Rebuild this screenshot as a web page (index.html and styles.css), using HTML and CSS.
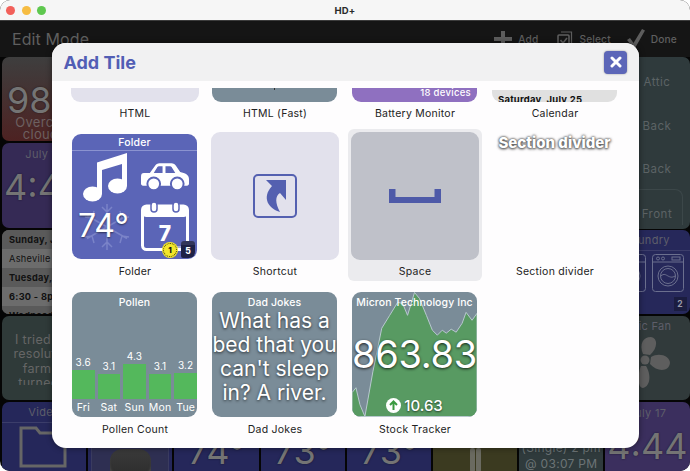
FILE: index.html
```html
<!DOCTYPE html>
<html lang="en">
<head>
<meta charset="utf-8">
<title>HD+</title>
<link rel="stylesheet" href="styles.css">
</head>
<body>
<div class="window">
  <div class="titlebar">
    <div class="lights"><i class="light red"></i><i class="light yellow"></i><i class="light green"></i></div>
    <div class="wintitle">HD+</div>
  </div>
  <div class="appbar">
    <div class="apptitle">Edit Mode</div>
    <div class="actions">
      <div class="action"><svg width="18" height="16" viewBox="0 0 18 16"><path d="M7 0h4v6h7v4h-7v6H7v-6H0V6h7z" fill="#5d5d5d"/></svg><span>Add</span></div>
      <div class="action"><svg width="16" height="16" viewBox="0 0 16 16" fill="none" stroke="#5d5d5d"><rect x="1" y="4" width="11" height="11.500" rx="1" stroke-width="1.600"/><path d="M4 1h10.500v11" stroke-width="1.200"/><path d="M3.500 9l2.500 3 4-5" stroke-width="1.600"/></svg><span>Select</span></div>
      <div class="action done"><svg width="18" height="20" viewBox="0 0 18 20"><path d="M0 11l3-2 3.500 5L15 0l3 1.500L7.500 20z" fill="#5d5d5d"/></svg><span>Done</span></div>
    </div>
  </div>
  <div class="board">
    <div class="bt bt-weather"><div class="big">98</div><div class="sub">Overcast<br>clouds</div></div>
    <div class="bt bt-clock"><div class="small">July 17</div><div class="big">4:44</div></div>
    <div class="bt bt-cal">
      <div class="ev dark"><b>Sunday, July 19</b></div>
      <div class="ev">Asheville 10:00</div>
      <div class="ev dark"><b>Tuesday, July 21</b></div>
      <div class="ev"><b>6:30 - 8pm</b></div>
      <div class="ev dark"><b>Wednesday</b></div>
    </div>
    <div class="bt bt-joke"><p>I tried my<br>resolution<br>farm is<br>turned a</p></div>
    <div class="bt bt-video"><div class="small ruled">Video</div><svg class="folder" width="48" height="43" viewBox="0 0 48 43" fill="none" stroke="#666" stroke-width="3"><path d="M2 41V3h15l4 5h25v33z"/></svg></div>
    <div class="bt bt-knob"><div class="knob-frame"><i class="knob"></i></div></div>
    <div class="bt bt-navy bt-c3"><div class="big">74°</div></div>
    <div class="bt bt-navy bt-c4"><div class="big">73°</div></div>
    <div class="bt bt-navy bt-c5"><div class="big">73°</div></div>
    <div class="bt bt-olive"><div class="pause"><i></i><i></i></div></div>
    <div class="bt bt-teal"><div class="small wide">(Single) 2 pm<br>@ 03:07 PM</div></div>
    <div class="bt bt-clock2"><div class="small">July 17</div><div class="big">4:44</div></div>
    <div class="bt bt-rooms">
      <div class="room">Attic</div><div class="room">Back</div><div class="room">Back</div><div class="room framed">Front</div>
    </div>
    <div class="bt bt-laundry">
      <div class="small ruled">Laundry</div>
      <div class="washers">
        <svg width="32" height="38" viewBox="0 0 32 38" fill="none" stroke="#6b6f8e" stroke-width="1"><rect x=".5" y=".5" width="31" height="37" rx="3"/><path d="M.5 8h31"/><circle cx="16" cy="22" r="10"/></svg>
        <svg width="32" height="38" viewBox="0 0 32 38" fill="none" stroke="#6b6f8e" stroke-width="1"><rect x=".5" y=".5" width="31" height="37" rx="3"/><path d="M.5 8h31"/><circle cx="6" cy="4.500" r="1.500"/><circle cx="11" cy="4.500" r="1.500"/><rect x="20" y="3" width="8" height="3"/><circle cx="16" cy="22" r="10"/><circle cx="16" cy="22" r="7.500"/><path d="M9 22c3-3 5-1 7 0s4 2 7 0"/></svg>
      </div>
      <div class="cube">2</div>
    </div>
    <div class="bt bt-fan">
      <div class="small">Attic Fan</div>
      <svg class="fan" width="72" height="60" viewBox="0 0 72 60" fill="#5e5e5e"><circle cx="36" cy="30" r="4.500"/><path d="M34 24C30 14 34 7 42 7c7 1 7 11-1 18zM42 27c8-5 19-1 19 6-1 9-13 9-20 1zM37 36c5 8 5 20-3 22-6 0-5-16-2-22z"/></svg>
    </div>
  </div>

  <section class="modal">
    <header class="modal-head">
      <h1>Add Tile</h1>
      <button class="close" aria-label="Close"><svg width="12" height="12" viewBox="0 0 12 12"><path d="M2 2l8 8M10 2l-8 8" stroke="#fff" stroke-width="3" stroke-linecap="round"/></svg></button>
    </header>
    <div class="modal-body">
      <div class="item"><div class="tile-lg cut lav"></div><div class="label">HTML</div></div>
      <div class="item"><div class="tile cut slate fast"><i></i></div><div class="label">HTML (Fast)</div></div>
      <div class="item"><div class="tile cut battery"><span>18 devices</span></div><div class="label">Battery Monitor</div></div>
      <div class="item"><div class="tile cut calendar"><span>Saturday, July 25</span></div><div class="label">Calendar</div></div>

      <div class="item">
        <div class="tile folder-tile">
          <div class="folder-title">Folder</div>
          <div class="folder-grid">
            <svg width="44" height="49" viewBox="0 0 44 49" fill="#fff"><path d="M14 9.500L44 0v33h-5V11L19 17v24h-5z"/><ellipse cx="9.500" cy="41" rx="9.500" ry="7.500"/><ellipse cx="34.500" cy="33" rx="9.500" ry="7.500"/></svg>
            <svg class="car" width="48" height="28" viewBox="0 0 49 28"><path fill="#fff" fill-rule="evenodd" d="M0 14c0-3 1-4 3-4h6l5-7c1-2 3-3 5-3h12c2 0 4 1 5 3l4 6c5 1 9 3 9 7v5c0 1-1 2-2 2H2c-1 0-2-1-2-2zM13 10h9V3h-3c-1 0-2 0-3 2zM25 10h10l-3-5c-1-2-2-2-3-2h-4z"/><circle cx="13" cy="21" r="6.500" fill="#fff" stroke="#5b65b7" stroke-width="2"/><circle cx="37" cy="21" r="6.500" fill="#fff" stroke="#5b65b7" stroke-width="2"/></svg>
            <div class="temp">
              <svg class="snow" width="48" height="48" viewBox="0 0 48 48" fill="none" stroke="#7a83c8" stroke-width="1.500"><path d="M24 1v46M4 12.500l40 23M44 12.500l-40 23M24 9l-5-5M24 9l5-5M24 39l-5 5M24 39l5 5M9 15l-7-1M9 15l2-7M39 33l7 1M39 33l-2 7M39 15l7-1M39 15l-2-7M9 33l-7 1M9 33l2 7"/></svg>
              <span>74°</span>
            </div>
            <div class="cal-wrap">
              <svg width="48" height="49" viewBox="0 0 48 49"><rect x="1.500" y="4" width="45" height="43.500" rx="4" fill="none" stroke="#fff" stroke-width="3"/><rect x="1.500" y="4" width="45" height="11" rx="4" fill="#fff"/><rect x="10" y="0" width="6" height="10" rx="3" fill="#fff" stroke="#5b65b7" stroke-width="1.500"/><rect x="32" y="0" width="6" height="10" rx="3" fill="#fff" stroke="#5b65b7" stroke-width="1.500"/></svg>
              <span>7</span>
            </div>
          </div>
          <div class="badge-link"></div>
          <div class="badge-yellow"><span>1</span></div>
          <div class="badge-cube">5</div>
        </div>
        <div class="label">Folder</div>
      </div>
      <div class="item">
        <div class="tile-lg lav center">
          <svg width="44" height="44" viewBox="0 0 44 44"><rect x="1" y="1" width="42" height="42" rx="4" fill="none" stroke="#5460b0" stroke-width="2"/><path fill="#5460b0" d="M13 6h20v20l-6-7c-5 3-5 10 0 19C16 35 8 24 19 12z"/></svg>
        </div>
        <div class="label">Shortcut</div>
      </div>
      <div class="item selected">
        <div class="tile-lg grey center">
          <svg width="52" height="14" viewBox="0 0 52 14"><path fill="#4e5aa8" d="M0 0h6.500v8h39V0H52v14H0z"/></svg>
        </div>
        <div class="label">Space</div>
      </div>
      <div class="item">
        <div class="tile divider">Section divider</div>
        <div class="label">Section divider</div>
      </div>

      <div class="item">
        <div class="tile slate pollen">
          <div class="tile-title">Pollen</div>
          <div class="bars">
            <div class="bar"><span>3.6</span><i style="height:29px"></i><em>Fri</em></div>
            <div class="bar"><span>3.1</span><i style="height:25px"></i><em>Sat</em></div>
            <div class="bar"><span>4.3</span><i style="height:35px"></i><em>Sun</em></div>
            <div class="bar"><span>3.1</span><i style="height:25px"></i><em>Mon</em></div>
            <div class="bar"><span>3.2</span><i style="height:26px"></i><em>Tue</em></div>
          </div>
        </div>
        <div class="label">Pollen Count</div>
      </div>
      <div class="item">
        <div class="tile slate jokes">
          <div class="tile-title">Dad Jokes</div>
          <p>What has a<br>bed that you<br>can't sleep<br>in? A river.</p>
        </div>
        <div class="label">Dad Jokes</div>
      </div>
      <div class="item">
        <div class="tile slate stock">
          <svg class="chart" width="125" height="125" viewBox="0 0 126 125"><path fill="#589a62" stroke="#b9c8cf" stroke-width="1" d="M0 101L4 96 8 113 13 125 21 80 30 36 38 23 46 10 51 11 56 23 63 0 68 6 75 23 81 38 86 43 91 38 95 41 100 37 105 40 111 31 115 20 121 28 126 21V125H0z"/></svg>
          <div class="tile-title">Micron Technology Inc</div>
          <div class="price">863.83</div>
          <div class="change"><svg width="15" height="15" viewBox="0 0 15 15"><circle cx="7.500" cy="7.500" r="7.500" fill="#fff"/><path d="M7.500 12V4M4 7l3.500-3.500L11 7" fill="none" stroke="#3a9a40" stroke-width="2"/></svg><span>10.63</span></div>
        </div>
        <div class="label">Stock Tracker</div>
      </div>
    </div>
  </section>
</div>
</body>
</html>
```
FILE: styles.css
```css
* { box-sizing: border-box; }
html, body { margin: 0; height: 100%; background: #fff; }
body { font-family: Inter, "Liberation Sans", sans-serif; overflow: hidden; }

.window { position: relative; width: 690px; height: 471px; border-radius: 10px; overflow: hidden; background: #050505; }

.titlebar { height: 21px; background: #f6f6f6; border-bottom: 1px solid #3c3c3c; display: flex; align-items: center; justify-content: center; position: relative; }
.lights { position: absolute; left: 6px; top: 6px; display: flex; gap: 6.500px; }
.light { width: 9px; height: 9px; border-radius: 50%; display: block; }
.red { background: #f2605a; }
.yellow { background: #f6bc42; }
.green { background: #5fc84f; }
.wintitle { font-size: 9.500px; font-weight: 700; color: #2a2a2a; letter-spacing: .2px; }

.appbar { height: 36px; background: #151515; display: flex; align-items: center; justify-content: space-between; padding: 0 13px 0 12px; }
.apptitle { font-size: 16px; color: #5f5f5f; letter-spacing: .1px; }
.actions { display: flex; align-items: center; gap: 19px; }
.action { display: flex; align-items: center; gap: 6px; font-size: 10.200px; font-weight: 500; color: #5f5f5f; letter-spacing: .15px; }
.done { margin-left: -3px; }

.board { height: 414px; display: grid; grid-template-columns: repeat(8, 84.200px); grid-template-rows: repeat(5, 84.250px); gap: 2px; padding: 0 2px; }
.bt { border-radius: 7px; overflow: hidden; color: #626262; text-align: center; position: relative; }
.big { font-size: 36px; font-weight: 400; line-height: 42px; color: #747474; text-shadow: 0 0 2px rgba(0,0,0,.5); white-space: nowrap; }
.sub { font-size: 13px; line-height: 11.500px; margin-top: -4px; color: #6d6060; letter-spacing: .3px; }
.small { font-size: 11px; line-height: 20px; color: #5e5e6a; letter-spacing: .3px; }
.wide { font-size: 12px; line-height: 16px; color: #6c7476; letter-spacing: .3px; }
.ruled { border-bottom: 1px solid rgba(255,255,255,.1); }

.bt-weather { grid-column: 1; grid-row: 1; background: linear-gradient(#3e3e3e, #4d2222); padding-top: 22px; }
.bt-weather .big { text-align: left; padding-left: 5px; }
.bt-clock { grid-column: 1; grid-row: 2; background: #352a55; padding-top: 1px; }
.bt-clock .big { margin-top: 2px; }
.bt-cal { grid-column: 1; grid-row: 3; background: #666; text-align: left; color: #111; font-size: 9.200px; }
.ev { height: 19px; line-height: 19px; padding-left: 7px; background: #6c6c6c; white-space: nowrap; letter-spacing: .3px; }
.ev.dark { background: #5a5a5a; }
.bt-joke { grid-column: 1; grid-row: 4; background: #2f3a39; font-size: 12.500px; line-height: 14.500px; letter-spacing: .3px; padding-top: 17px; white-space: nowrap; color: #666; }
.bt-joke p { margin: 0; height: 52px; overflow: hidden; }
.bt-video { grid-column: 1; grid-row: 5; background: #25275a; }
.folder { margin: 2px 0 0 17px; display: block; }
.bt-knob { grid-column: 2; grid-row: 5; background: #25275a; padding: 2px 3px 0; }
.knob-frame { height: 100%; background: #2e2f52; border: 1px solid #3a3b60; display: flex; justify-content: center; padding-top: 44px; }
.knob { display: block; width: 41px; height: 32px; border-radius: 12px; background: linear-gradient(#3a3a3a, #2a2a2a); box-shadow: inset 0 -5px 2px #444; }
.bt-navy { background: #25275a; grid-row: 5; padding-top: 28px; }
.bt-c3 { grid-column: 3; }
.bt-c4 { grid-column: 4; }
.bt-c5 { grid-column: 5; }
.bt-olive { grid-column: 6; grid-row: 5; background: #3b3a20; }
.pause { display: flex; justify-content: center; gap: 1px; padding-top: 46px; }
.pause i { display: block; width: 5px; height: 24px; background: #6a6a60; border-radius: 2px; }
.bt-teal { grid-column: 7; grid-row: 5; background: #2f3a3c; padding-top: 38px; white-space: nowrap; }
.bt-clock2 { grid-column: 8; grid-row: 5; background: #3b2f5e; padding-top: 1px; }
.bt-clock2 .big { margin-top: 2px; }
.bt-rooms { grid-column: 8; grid-row: 1 / span 2; margin-bottom: -1px; background: #2f3a3c; display: flex; flex-direction: column; align-items: center; padding: 18px 0 0 19px; gap: 29.500px; font-size: 11.500px; color: #5c6365; letter-spacing: .5px; }
.room { line-height: 14px; }
.framed { border: 1px solid #3c4749; border-bottom: 0; border-radius: 8px 8px 0 0; width: 52px; margin: -17px 0 0 0; padding: 17px 0 4px; text-align: center; }
.bt-laundry { grid-column: 8; grid-row: 3; background: #26285a; }
.washers { display: flex; justify-content: flex-end; gap: 6px; padding: 3px 6px 0 0; }
.cube { position: absolute; right: 3px; bottom: 3px; width: 13px; height: 14px; background: #1b1d40; color: #9a9aaa; font-size: 8.500px; font-weight: 700; line-height: 14px; }
.bt-fan { grid-column: 8; grid-row: 4; background: #313a3b; }
.fan { position: absolute; left: 4px; top: 14px; }

.modal { position: absolute; left: 52px; top: 43px; width: 587px; height: 405px; background: #fefdfe; border-radius: 14px; overflow: hidden; box-shadow: 0 0 6px rgba(0,0,0,.45); }
.modal-head { height: 38px; background: #f1f1f2; display: flex; align-items: center; justify-content: space-between; padding: 0 12px 0 11.500px; }
.modal-head h1 { margin: 0; font-size: 18px; font-weight: 700; color: #525eb5; letter-spacing: 0; }
.close { width: 23px; height: 23px; padding: 0; border: 0; border-radius: 4px; background: #5c66b8; display: flex; align-items: center; justify-content: center; box-shadow: 0 0 2px rgba(0,0,0,.4); }

.modal-body { display: grid; grid-template-columns: repeat(4, 134px); gap: 6px; padding: 4px 0 0 16px; align-content: start; }
.item { padding: 3px 3px 2px; border-radius: 6px; display: flex; flex-direction: column; }
.selected { background: #ebebee; }
.label { height: 14px; margin-top: 5px; font-size: 10.500px; line-height: 14px; text-align: center; color: #222; letter-spacing: .25px; white-space: nowrap; }

.tile { width: 125px; height: 125px; margin: 1.500px 2px 1.500px 1px; border-radius: 9px; overflow: hidden; position: relative; color: #fff; }
.tile-lg { width: 128px; height: 128px; border-radius: 9px; overflow: hidden; }
.cut { height: 14px; border-radius: 0 0 9px 9px; margin-top: 0; margin-bottom: 0; }
.tile.cut { height: 14px; }
.lav { background: #e2e1ec; }
.grey { background: #bfc1c9; }
.slate { background: #7a8c98; }
.center { display: flex; align-items: center; justify-content: center; }
.fast { display: flex; justify-content: center; }
.fast i { display: block; width: 1px; height: 2px; background: #333; }
.battery { background: #8f70c0; font-size: 9.500px; font-weight: 500; text-align: right; padding-right: 6px; line-height: 10px; letter-spacing: .3px; }
.tile.calendar { background: linear-gradient(#fefdfe 2px, #e0e0e0 2px); color: #111; font-size: 9.500px; font-weight: 700; padding: 5px 0 0 6px; line-height: 14px; letter-spacing: .2px; }

.folder-tile { background: #5b65b7; }
.folder-title { height: 17px; font-size: 10.500px; font-weight: 500; line-height: 18px; text-align: center; border-bottom: 1px solid #8b93d0; letter-spacing: .2px; }
.folder-grid { display: grid; grid-template-columns: 58px 48px; grid-template-rows: 49px 49px; padding: 2px 0 0 11px; align-items: start; }
.car { margin-top: 10px; }
.temp { position: relative; height: 49px; margin-left: -5px; font-size: 32px; line-height: 48px; text-shadow: 0 1px 2px rgba(0,0,0,.55); white-space: nowrap; }
.temp span { position: relative; }
.snow { position: absolute; left: 5px; top: 1px; }
.cal-wrap { position: relative; height: 49px; }
.cal-wrap span { position: absolute; left: 0; width: 48px; top: 20px; text-align: center; font-size: 21px; line-height: 24px; font-weight: 800; }
.badge-link { position: absolute; left: 104px; top: 112px; width: 10px; height: 5px; background: rgba(255,255,255,.45); }
.badge-yellow { position: absolute; left: 91px; top: 109px; width: 14px; height: 14px; border-radius: 50%; background: #f2e62a; border: 1px dotted #3a3a10; box-shadow: 0 0 0 1px #f2e62a; color: #111; font-size: 8px; font-weight: 800; line-height: 12px; text-align: center; }
.badge-cube { position: absolute; right: 2px; bottom: 1px; width: 14px; height: 17px; border-radius: 3px 3px 6px 2px; background: linear-gradient(#33365a 4px, #1e2146 4px); color: #fff; font-size: 8.500px; font-weight: 800; line-height: 20px; text-align: center; }

.divider { background: none; overflow: visible; color: #fff; font-size: 15px; font-weight: 800; text-align: center; line-height: 18px; text-shadow: 0 0 2px #555, 0 1px 3px #555, 0 0 3px #777; white-space: nowrap; }

.tile-title { position: relative; font-size: 10.500px; font-weight: 500; line-height: 13px; padding-top: 4px; text-align: center; letter-spacing: .1px; white-space: nowrap; }
.pollen { display: flex; flex-direction: column; justify-content: space-between; }
.bars { display: flex; gap: 3px; align-items: stretch; }
.bar { flex: 1; display: flex; flex-direction: column; justify-content: flex-end; align-items: stretch; text-align: center; }
.bar span { font-size: 10px; line-height: 12px; margin-bottom: 2px; color: #fff; letter-spacing: .2px; }
.bar i { display: block; background: #54b85c; }
.bar em { font-style: normal; font-size: 10.500px; line-height: 18px; letter-spacing: .2px; white-space: nowrap; }

.jokes { text-align: center; }
.jokes p { margin: 0; font-size: 21px; line-height: 24px; text-shadow: 0 1px 3px rgba(0,0,0,.7); white-space: nowrap; }

.stock { text-align: center; }
.chart { position: absolute; left: 0; top: 0; }
.price { position: relative; margin-top: 22px; font-size: 38px; line-height: 46px; text-shadow: 0 1px 3px rgba(0,0,0,.8); white-space: nowrap; letter-spacing: -.3px; }
.change { position: relative; display: flex; justify-content: center; align-items: center; gap: 3px; margin-top: 20px; font-size: 15px; line-height: 18px; font-weight: 500; text-shadow: 0 1px 2px rgba(0,0,0,.6); }
```
